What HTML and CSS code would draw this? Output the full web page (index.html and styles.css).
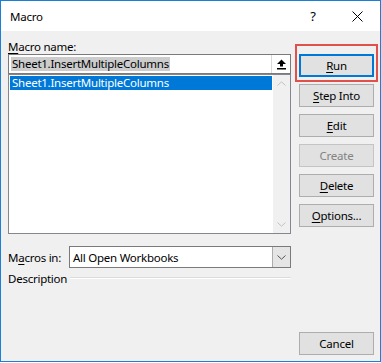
FILE: index.html
```html
<!DOCTYPE html>
<html lang="en">
<head>
    <meta charset="UTF-8">
    <meta name="viewport" content="width=device-width, initial-scale=1.0">
    <title>Macro</title>
    <link rel="stylesheet" href="styles.css">
</head>
<body>
    <div class="dialog">
        <div class="titlebar">
            <span class="title">Macro</span>
            <span class="help">?</span>
            <span class="close">
                <svg width="11" height="11" viewBox="0 0 11 11">
                    <path d="M0.5 0.5 L10.5 10.5 M10.5 0.5 L0.5 10.5" stroke="#000" stroke-width="1" fill="none"/>
                </svg>
            </span>
        </div>

        <div class="content">
            <div class="main">
                <div class="label"><u>M</u>acro name:</div>
                <div class="name-box">
                    <span class="name-text">Sheet1.InsertMultipleColumns</span>
                    <span class="collapse-btn">
                        <svg width="11" height="11" viewBox="0 0 11 11">
                            <path d="M5.5 0.5 L10 5 L7 5 L7 7.5 L4 7.5 L4 5 L1 5 Z" fill="#000"/>
                            <rect x="1" y="9" width="9" height="1.5" fill="#000"/>
                        </svg>
                    </span>
                </div>
                <div class="macro-list">
                    <div class="list-items">
                        <div class="list-item selected">Sheet1.InsertMultipleColumns</div>
                    </div>
                    <div class="scrollbar">
                        <svg width="9" height="5" viewBox="0 0 9 5">
                            <path d="M0.5 4.5 L4.5 0.8 L8.5 4.5" stroke="#c2c2c2" fill="none"/>
                        </svg>
                        <svg width="9" height="5" viewBox="0 0 9 5">
                            <path d="M0.5 0.5 L4.5 4.2 L8.5 0.5" stroke="#c2c2c2" fill="none"/>
                        </svg>
                    </div>
                </div>

                <div class="macros-in">
                    <span class="label">M<u>a</u>cros in:</span>
                    <div class="combo">
                        <span class="combo-text">All Open Workbooks</span>
                        <span class="combo-btn">
                            <svg width="9" height="5" viewBox="0 0 9 5">
                                <path d="M0.5 0.5 L4.5 4.2 L8.5 0.5" stroke="#555" fill="none"/>
                            </svg>
                        </span>
                    </div>
                </div>

                <div class="description">
                    <span class="label">Description</span>
                    <span class="rule"></span>
                </div>
            </div>

            <div class="side">
                <div class="run-wrap">
                    <button class="btn default"><u>R</u>un</button>
                    <div class="highlight"></div>
                </div>
                <button class="btn"><u>S</u>tep Into</button>
                <button class="btn"><u>E</u>dit</button>
                <button class="btn" disabled>Create</button>
                <button class="btn"><u>D</u>elete</button>
                <button class="btn"><u>O</u>ptions...</button>
                <button class="btn cancel">Cancel</button>
            </div>
        </div>
    </div>
</body>
</html>
```

FILE: styles.css
```css
body {
    margin: 0;
    padding: 0;
    background: #fff;
    font-family: 'Segoe UI', 'Noto Sans', 'Open Sans', sans-serif;
    font-size: 11.5px;
    letter-spacing: -0.25px;
    color: #000;
}

u {
    text-decoration: underline;
    text-decoration-thickness: 1px;
    text-underline-offset: 2px;
}

.dialog {
    width: 381px;
    height: 362px;
    box-sizing: border-box;
    border: 1px solid #1a7fd6;
    display: flex;
    flex-direction: column;
}

.titlebar {
    height: 30px;
    background: #fff;
    display: flex;
    align-items: center;
    padding-left: 9px;
    flex-shrink: 0;
}

.title {
    flex: 1;
    line-height: 15px;
}

.help {
    width: 46px;
    text-align: center;
    font-size: 13px;
    margin-right: -2px;
}

.close {
    width: 46px;
    display: flex;
    justify-content: center;
    align-items: center;
}

.content {
    flex: 1;
    background: #f0f0f0;
    display: grid;
    grid-template-columns: 283px 75px;
    column-gap: 8px;
    padding: 8px 6px 6px 7px;
}

.label {
    line-height: 15px;
    white-space: nowrap;
}

.main {
    display: flex;
    flex-direction: column;
}

.name-box {
    height: 20px;
    box-sizing: border-box;
    border: 1px solid #7a7a7a;
    background: #fff;
    display: flex;
    align-items: center;
}

.name-text {
    background: #cccccc;
    margin-left: 2px;
    padding: 0 1px;
    line-height: 14px;
}

.collapse-btn {
    margin-left: auto;
    width: 18px;
    height: 18px;
    border-left: 1px solid #d9d9d9;
    display: flex;
    justify-content: center;
    align-items: center;
    background: #fff;
}

.macro-list {
    height: 160px;
    box-sizing: border-box;
    border: 1px solid #828790;
    background: #fff;
    display: flex;
}

.list-items {
    flex: 1;
    padding: 1px;
}

.list-item {
    line-height: 14px;
    padding-left: 2px;
}

.list-item.selected {
    background: #0078d7;
    color: #fff;
}

.scrollbar {
    width: 17px;
    background: #f0f0f0;
    display: flex;
    flex-direction: column;
    justify-content: space-between;
    align-items: center;
    padding: 6px 0;
}

.macros-in {
    margin-top: 12px;
    display: flex;
    align-items: center;
}

.macros-in .label {
    width: 61px;
}

.combo {
    flex: 1;
    height: 22px;
    box-sizing: border-box;
    border: 1px solid #7a7a7a;
    background: #fff;
    display: flex;
    align-items: center;
}

.combo-text {
    padding-left: 3px;
    flex: 1;
}

.combo-btn {
    width: 17px;
    height: 20px;
    background: #e5e5e5;
    border-left: 1px solid #acacac;
    display: flex;
    justify-content: center;
    align-items: center;
}

.description {
    margin-top: 3px;
    display: flex;
    align-items: center;
    gap: 3px;
}

.rule {
    flex: 1;
    border-top: 1px solid #dcdcdc;
    border-bottom: 1px solid #fff;
    margin-top: -1px;
}

.side {
    display: flex;
    flex-direction: column;
    gap: 7px;
    padding-top: 15px;
}

.btn {
    font-family: inherit;
    font-size: 11.5px;
    letter-spacing: -0.25px;
    color: #000;
    height: 23px;
    width: 75px;
    margin: 0;
    padding: 0;
    background: #e1e1e1;
    border: 1px solid #adadad;
    line-height: 15px;
}

.btn:disabled {
    color: #838383;
    background: #e1e1e1;
    border-color: #c4c4c4;
}

.btn.default {
    border: 2px solid #0078d7;
}

.btn.cancel {
    margin-top: auto;
}

.run-wrap {
    position: relative;
    height: 23px;
}

.highlight {
    position: absolute;
    left: -4px;
    right: -4px;
    top: -10px;
    bottom: -5px;
    border: 2px solid #e0514b;
}
```
